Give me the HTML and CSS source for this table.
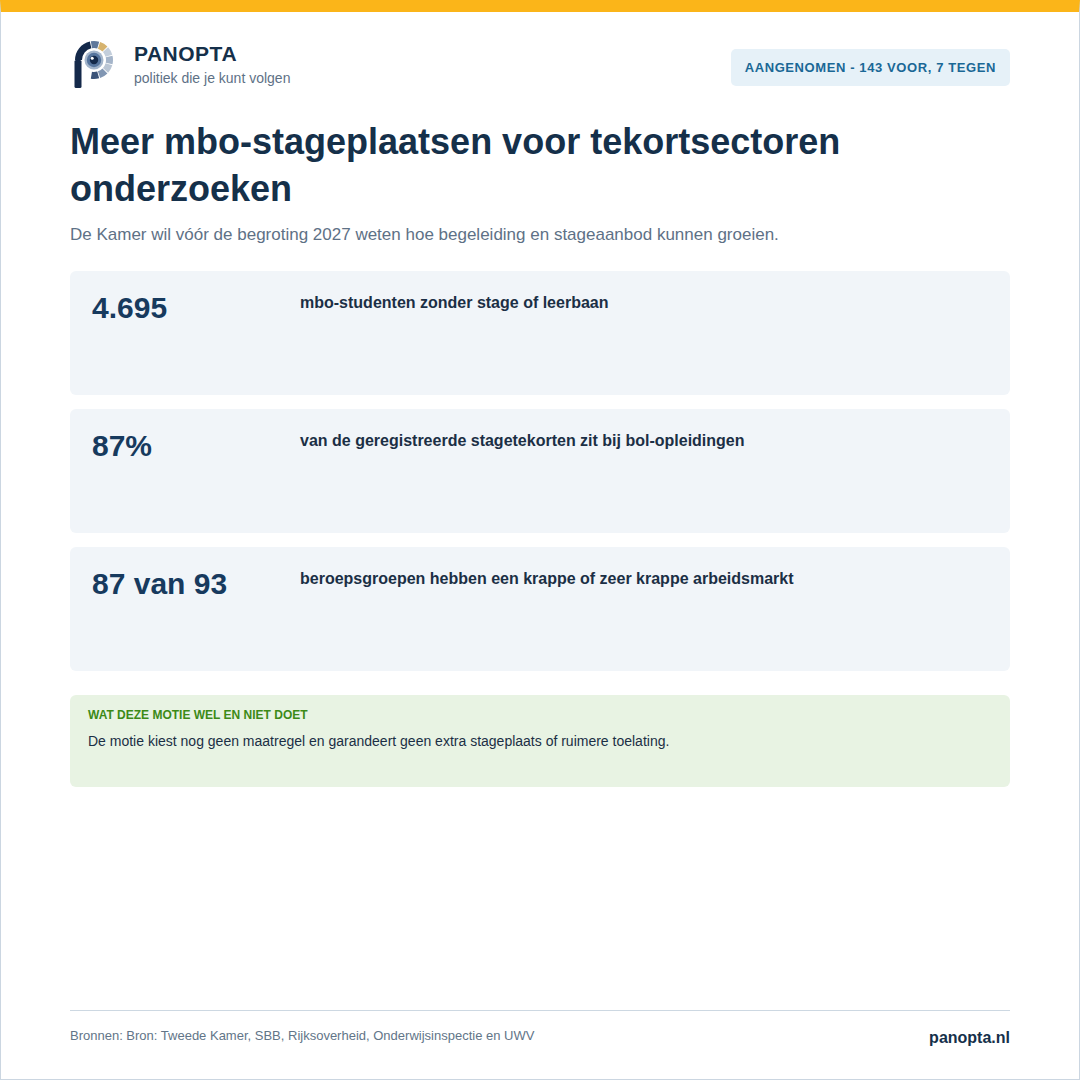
FILE: index.html
```html
<!DOCTYPE html>
<html lang="nl">
<head>
<meta charset="utf-8">
<title>Panopta</title>
<link rel="stylesheet" href="styles.css">
</head>
<body>
<div class="page">
  <header class="header">
    <div class="brand">
      <svg class="logo" viewBox="0 0 46 48" width="46" height="48" aria-hidden="true">
        <circle cx="24" cy="20" r="15.5" fill="none" stroke="#14294a" stroke-width="7" pathLength="360" stroke-dasharray="77 283" stroke-dashoffset="-180"/>
        <rect x="4.5" y="20" width="7" height="28" rx="1.5" fill="#14294a"/>
        <circle cx="24" cy="20" r="15.5" fill="none" stroke="#5f789b" stroke-width="7" pathLength="360" stroke-dasharray="26 334" stroke-dashoffset="-260"/>
        <circle cx="24" cy="20" r="15.5" fill="none" stroke="#d6b36e" stroke-width="7" pathLength="360" stroke-dasharray="26 334" stroke-dashoffset="-289"/>
        <circle cx="24" cy="20" r="15.5" fill="none" stroke="#c3cedb" stroke-width="7" pathLength="360" stroke-dasharray="26 334" stroke-dashoffset="-318"/>
        <circle cx="24" cy="20" r="15.5" fill="none" stroke="#a4b4c9" stroke-width="7" pathLength="360" stroke-dasharray="26 334" stroke-dashoffset="-347"/>
        <circle cx="24" cy="20" r="15.5" fill="none" stroke="#b9c5d4" stroke-width="7" pathLength="360" stroke-dasharray="26 334" stroke-dashoffset="-16"/>
        <circle cx="24" cy="20" r="15.5" fill="none" stroke="#8196b3" stroke-width="7" pathLength="360" stroke-dasharray="26 334" stroke-dashoffset="-45"/>
        <circle cx="24" cy="20" r="15.5" fill="none" stroke="#3b5479" stroke-width="7" pathLength="360" stroke-dasharray="26 334" stroke-dashoffset="-74"/>
        <circle cx="24" cy="20" r="9.5" fill="#a3b5cb"/>
        <circle cx="24" cy="20" r="7.2" fill="#56759e"/>
        <circle cx="24" cy="20" r="4.2" fill="#13294a"/>
        <circle cx="22.2" cy="18.2" r="1.5" fill="#ffffff"/>
      </svg>
      <div class="brand-text">
        <div class="brand-name">PANOPTA</div>
        <div class="brand-tag">politiek die je kunt volgen</div>
      </div>
    </div>
    <div class="badge">AANGENOMEN - 143 VOOR, 7 TEGEN</div>
  </header>

  <main class="main">
    <h1 class="title">Meer mbo-stageplaatsen voor tekortsectoren onderzoeken</h1>
    <p class="lead">De Kamer wil vóór de begroting 2027 weten hoe begeleiding en stageaanbod kunnen groeien.</p>

    <div class="cards">
      <div class="card">
        <div class="num">4.695</div>
        <div class="label">mbo-studenten zonder stage of leerbaan</div>
      </div>
      <div class="card">
        <div class="num">87%</div>
        <div class="label">van de geregistreerde stagetekorten zit bij bol-opleidingen</div>
      </div>
      <div class="card">
        <div class="num">87 van 93</div>
        <div class="label">beroepsgroepen hebben een krappe of zeer krappe arbeidsmarkt</div>
      </div>
    </div>

    <section class="note">
      <div class="note-title">WAT DEZE MOTIE WEL EN NIET DOET</div>
      <div class="note-text">De motie kiest nog geen maatregel en garandeert geen extra stageplaats of ruimere toelating.</div>
    </section>
  </main>

  <footer class="footer">
    <div class="sources">Bronnen: Bron: Tweede Kamer, SBB, Rijksoverheid, Onderwijsinspectie en UWV</div>
    <div class="site">panopta.nl</div>
  </footer>
</div>
</body>
</html>
```

FILE: styles.css
```css
* { box-sizing: border-box; }

html, body {
  margin: 0;
  padding: 0;
  background: #ffffff;
}

body {
  font-family: "Liberation Sans", Arial, Helvetica, sans-serif;
  color: #15304a;
}

.page {
  width: 1080px;
  height: 1080px;
  border: 1px solid #cbd6e1;
  border-top: 12px solid #fbb519;
  padding: 28px 69px 0;
  display: flex;
  flex-direction: column;
}

.header {
  display: flex;
  justify-content: space-between;
  align-items: flex-start;
  height: 48px;
}

.brand {
  display: flex;
  align-items: flex-start;
  gap: 18px;
}

.logo {
  display: block;
  flex: none;
}

.brand-text {
  margin-top: 1px;
}

.brand-name {
  font-size: 21px;
  line-height: 25px;
  font-weight: 700;
  letter-spacing: 0.5px;
  color: #15304a;
}

.brand-tag {
  margin-top: 3px;
  font-size: 14px;
  line-height: 18px;
  color: #5e7186;
}

.badge {
  margin-top: 9px;
  background: #e6f1f8;
  color: #1a6896;
  font-size: 13px;
  line-height: 17px;
  font-weight: 700;
  letter-spacing: 0.6px;
  padding: 10px 14px;
  border-radius: 5px;
}

.main {
  display: flex;
  flex-direction: column;
}

.title {
  margin: 30px 0 0;
  font-size: 36px;
  line-height: 47px;
  font-weight: 700;
  color: #15304a;
}

.lead {
  margin: 11px 0 0;
  font-size: 17px;
  line-height: 24px;
  color: #5e7186;
}

.cards {
  margin-top: 24px;
  display: flex;
  flex-direction: column;
  gap: 14px;
}

.card {
  min-height: 124px;
  background: #f1f5f9;
  border-radius: 6px;
  padding: 20px 22px;
  display: grid;
  grid-template-columns: 188px 1fr;
  column-gap: 20px;
  align-items: start;
}

.num {
  font-size: 30px;
  line-height: 34px;
  font-weight: 700;
  color: #173a5e;
}

.label {
  padding-top: 1px;
  font-size: 16px;
  line-height: 22px;
  font-weight: 700;
  color: #1b2f45;
}

.note {
  margin-top: 24px;
  min-height: 92px;
  background: #e8f3e3;
  border-radius: 6px;
  padding: 12px 18px;
}

.note-title {
  font-size: 12px;
  line-height: 16px;
  font-weight: 700;
  color: #3c8a17;
}

.note-text {
  margin-top: 8px;
  font-size: 14px;
  line-height: 20px;
  color: #1b2f45;
}

.footer {
  margin-top: auto;
  height: 69px;
  border-top: 1px solid #cdd8e2;
  padding-top: 16px;
  display: flex;
  justify-content: space-between;
  align-items: flex-start;
}

.sources {
  font-size: 13px;
  line-height: 18px;
  color: #627588;
}

.site {
  margin-top: 1px;
  font-size: 16px;
  line-height: 20px;
  font-weight: 700;
  color: #15304a;
}
```
